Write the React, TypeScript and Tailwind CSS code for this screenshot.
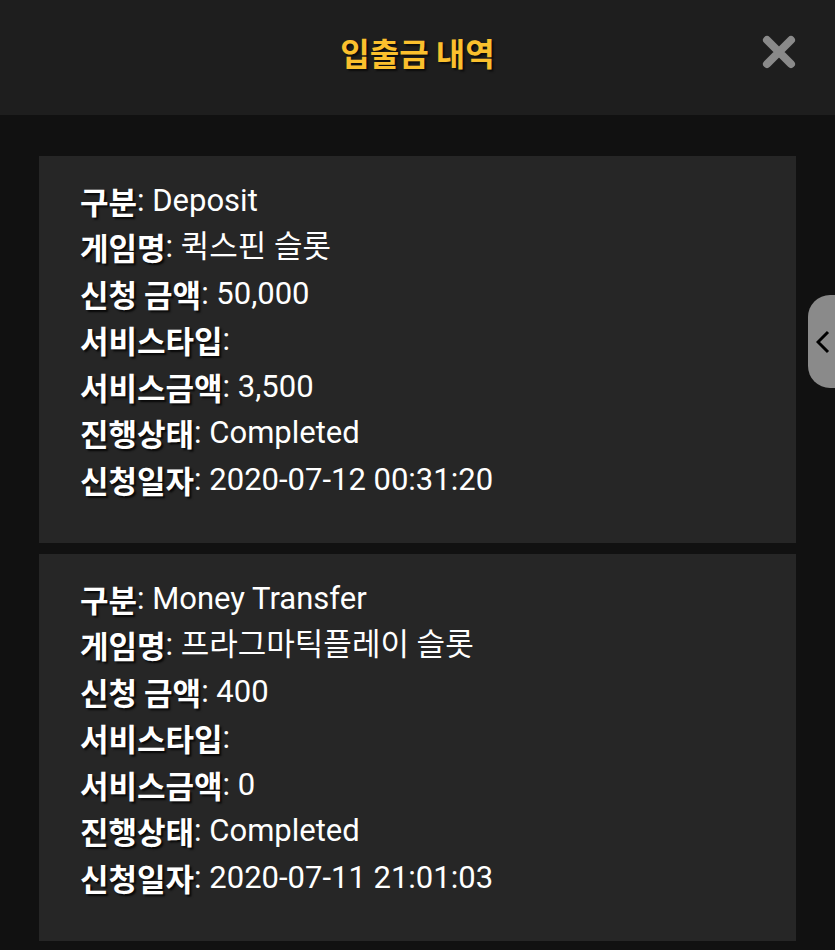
interface Row {
  label: string;
  value: string;
}

const records: Row[][] = [
  [
    { label: '구분', value: 'Deposit' },
    { label: '게임명', value: '퀵스핀 슬롯' },
    { label: '신청 금액', value: '50,000' },
    { label: '서비스타입', value: '' },
    { label: '서비스금액', value: '3,500' },
    { label: '진행상태', value: 'Completed' },
    { label: '신청일자', value: '2020-07-12 00:31:20' },
  ],
  [
    { label: '구분', value: 'Money Transfer' },
    { label: '게임명', value: '프라그마틱플레이 슬롯' },
    { label: '신청 금액', value: '400' },
    { label: '서비스타입', value: '' },
    { label: '서비스금액', value: '0' },
    { label: '진행상태', value: 'Completed' },
    { label: '신청일자', value: '2020-07-11 21:01:03' },
  ],
];

export default function App() {
  return (
    <div className="relative min-h-[950px] bg-[#111111] font-['Roboto','Noto_Sans_CJK_KR',sans-serif]">
      <header className="relative h-[115px] bg-[#1e1e1e] flex items-center justify-center">
        <h1 className="text-[32px] font-bold text-[#fbc02d] font-['Noto_Sans_CJK_KR',sans-serif] leading-none -mt-[12px] [text-shadow:2px_2px_2px_rgba(0,0,0,0.6)]">
          입출금 내역
        </h1>
        {/* close button */}
        <button className="absolute right-[38px] top-[34px] w-[36px] h-[36px]" aria-label="Close">
          <svg viewBox="0 0 36 36" className="w-full h-full">
            <path d="M6 6 L30 30 M30 6 L6 30" stroke="#8a8a8a" strokeWidth="8" strokeLinecap="round" />
          </svg>
        </button>
      </header>

      <main className="flex flex-col gap-[11px] pt-[41px] pb-[10px] px-[39px]">
        {records.map((rows, i) => (
          <div key={i} className="bg-[#262626] pl-[41px] pt-[21px] h-[387px]">
            {rows.map((r) => (
              <div key={r.label} className="h-[46.5px] flex items-center text-[31px] leading-none text-white whitespace-nowrap">
                <span className="font-bold font-['Noto_Sans_CJK_KR',sans-serif] [text-shadow:2px_2px_2px_rgba(0,0,0,0.8)]">
                  {r.label}
                </span>
                <span className="whitespace-pre">: {r.value}</span>
              </div>
            ))}
          </div>
        ))}
      </main>

      {/* side drawer tab */}
      <div className="absolute right-0 top-[295px] w-[27px] h-[93px] bg-[#8a8a8a] rounded-l-[22px] flex items-center pl-[8px]">
        <svg viewBox="0 0 14 24" className="w-[14px] h-[24px]">
          <path d="M12 2 L2 12 L12 22" fill="none" stroke="#000" strokeWidth="3" />
        </svg>
      </div>
    </div>
  );
}
